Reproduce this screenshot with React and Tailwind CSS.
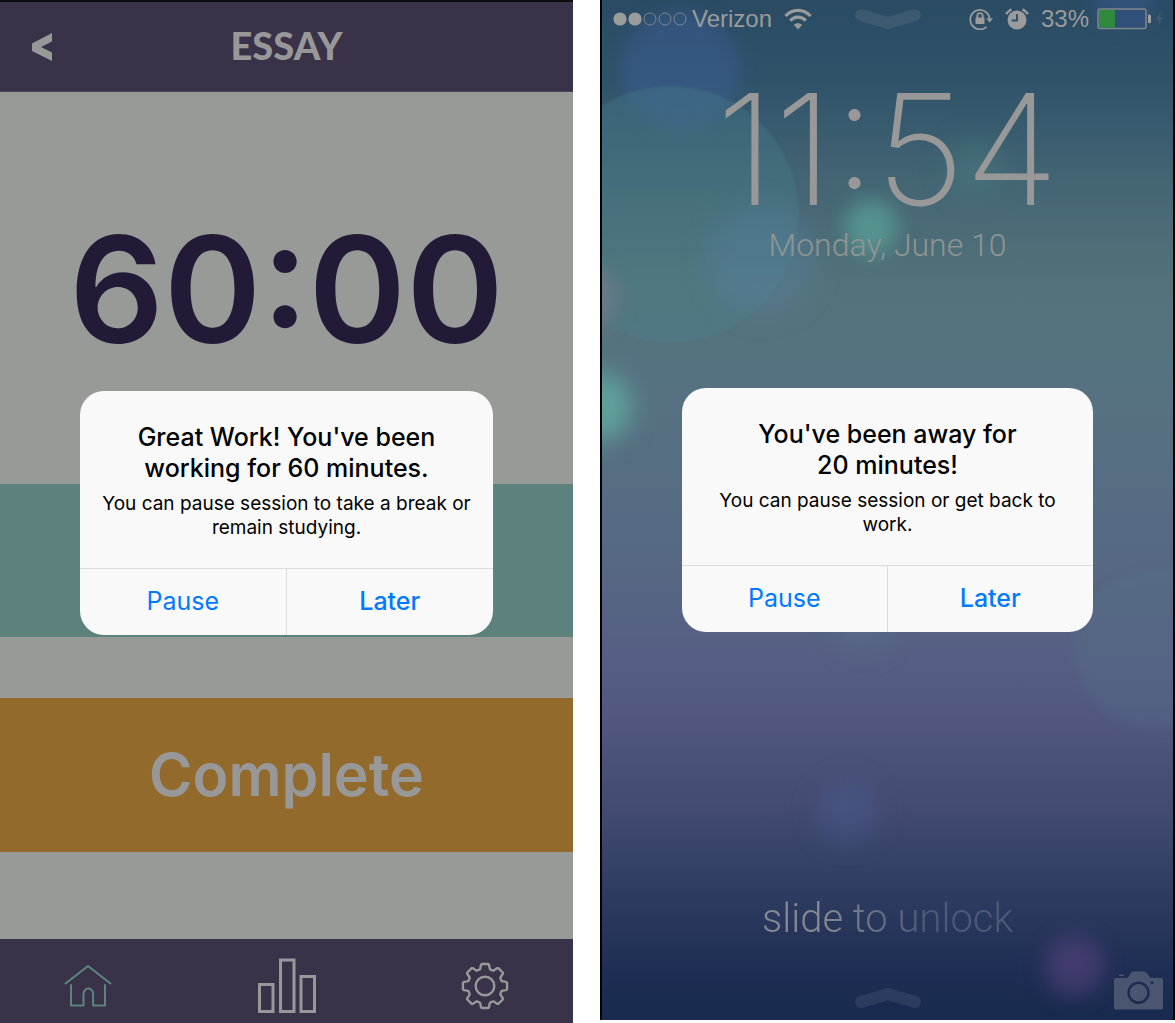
import React from "react";

const gearPath = (() => {
  const pts = [];
  const at = (r, deg) => {
    const a = (deg * Math.PI) / 180;
    pts.push(`${(24 + r * Math.sin(a)).toFixed(2)} ${(24 - r * Math.cos(a)).toFixed(2)}`);
  };
  for (let i = 0; i < 8; i++) {
    const c = i * 45;
    at(17.3, c - 17);
    at(18.4, c - 14.5);
    at(21.4, c - 11);
    at(22.3, c - 8.5);
    at(22.3, c + 8.5);
    at(21.4, c + 11);
    at(18.4, c + 14.5);
    at(17.3, c + 17);
  }
  return `M${pts.join("L")}Z`;
})();

function AlertDialog({ id, title, message }) {
  return (
    <div className="absolute inset-0 flex items-center px-20">
      <section
        role="alertdialog"
        aria-labelledby={`${id}-title`}
        aria-describedby={`${id}-message`}
        className="w-full overflow-hidden rounded-3xl bg-[#f9f9f9] text-center text-black"
      >
        <div className="px-3 pt-[31px] pb-7">
          <h2 id={`${id}-title`} className="text-[25px] leading-[31px] font-medium">
            {title[0]}
            <br />
            {title[1]}
          </h2>
          <p id={`${id}-message`} className="mt-2 text-[19px] leading-6">
            {message}
          </p>
        </div>
        <div className="grid h-[67px] grid-cols-2 divide-x divide-[#dcdcdd] border-t border-[#dcdcdd] text-[25px] text-[#007aff]">
          <button type="button">Pause</button>
          <button type="button" className="font-medium">Later</button>
        </div>
      </section>
    </div>
  );
}

function TimerPhone() {
  return (
    <main className="relative flex flex-col border-t-2 border-[#0d0c10] bg-[#989a98]">
      <header className="grid h-[90px] grid-cols-3 items-center border-b border-[#4b4558] bg-[#393249] px-8 text-[#989898]">
        <button type="button" aria-label="Back" className="justify-self-start">
          <svg width="20" height="28" viewBox="0 0 20 28" fill="currentColor">
            <path d="M20 0V8.500L9 14L20 19.500V28L0 18V10.500Z" />
          </svg>
        </button>
        <h1 className="pb-1 text-center font-[Lato] text-[38px] leading-10 font-black">ESSAY</h1>
      </header>
      <div className="flex flex-1 items-center justify-center pt-1 text-[148px] leading-none font-semibold text-[#221a37]">
        60:00
      </div>
      <div className="h-[153px] bg-[#5d817c]" />
      <button
        type="button"
        className="mt-[61px] h-[154px] bg-[#926b2c] text-[59px] font-semibold text-[#989898]"
      >
        Complete
      </button>
      <nav className="mt-[87px] flex h-[84px] items-center justify-between bg-[#393249] px-16 pt-2.5 text-[#989898]">
        <a href="#home" aria-label="Home" className="text-[#5d8580]">
          <svg width="48" height="44" viewBox="0 0 48 44" fill="none" stroke="currentColor" strokeWidth="2" strokeLinecap="round" strokeLinejoin="round">
            <path d="M1.500 19.500L24 2L46.500 19.500M7 21V41.500H19.500V30a4.800 5.500 0 0 1 9.600 0V41.500H41V21" />
          </svg>
        </a>
        <a href="#stats" aria-label="Statistics">
          <svg width="58" height="56" viewBox="0 0 58 56" fill="none" stroke="currentColor" strokeWidth="3">
            <path d="M1.500 26.500H15V53.500H1.500ZM22.500 2H36V53.500H22.500ZM43 18.500H56.500V53.500H43Z" />
          </svg>
        </a>
        <a href="#settings" aria-label="Settings">
          <svg width="48" height="48" viewBox="0 0 48 48" fill="none" stroke="currentColor" strokeWidth="2.400" strokeLinejoin="round">
            <path d={gearPath} />
            <circle cx="24" cy="24" r="9.300" />
          </svg>
        </a>
      </nav>
      <AlertDialog id="work" title={["Great Work! You've been", "working for 60 minutes."]} message="You can pause session to take a break or remain studying." />
    </main>
  );
}

function Grabber({ up }) {
  return (
    <svg width="68" height="24" viewBox="0 0 68 24" fill="none" stroke="#ffffff" strokeOpacity="0.08" strokeWidth="12" strokeLinecap="round" strokeLinejoin="round">
      <path d={up ? "M7 16L34 8L61 16" : "M7 8L34 16L61 8"} />
    </svg>
  );
}

function StatusBar() {
  return (
    <div className="grid h-[38px] grid-cols-[1fr_auto_1fr] items-center px-2.5 font-['Liberation_Sans'] text-2xl text-[#9b9b9b]">
      <div className="flex items-center">
        <svg width="78" height="16" viewBox="0 0 78 16" fill="none" stroke="currentColor">
          <circle cx="8" cy="8" r="6.600" fill="currentColor" stroke="none" />
          <circle cx="23" cy="8" r="6.600" fill="currentColor" stroke="none" />
          <circle cx="38" cy="8" r="6" strokeOpacity="0.700" />
          <circle cx="53" cy="8" r="6" strokeOpacity="0.700" />
          <circle cx="68" cy="8" r="6" strokeOpacity="0.700" />
        </svg>
        <span className="ml-0.5">Verizon</span>
        <svg className="ml-3" width="28" height="22" viewBox="0 0 28 22" fill="none" stroke="currentColor" strokeWidth="3.200">
          <path d="M1.500 8C8.500 0.500 19.500 0.500 26.500 8M6.200 12.600C10.600 8 17.400 8 21.800 12.600" />
          <path d="M14 21.500L9.800 16.800C12 14.700 16 14.700 18.200 16.800Z" fill="currentColor" stroke="none" />
        </svg>
      </div>
      <Grabber />
      <div className="flex items-center justify-end">
        <svg width="24" height="22" viewBox="0 0 24 22" fill="none" stroke="currentColor" strokeWidth="1.800">
          <path d="M17.500 18.800A9.700 9.700 0 1 1 20.600 10.500" />
          <path d="M17.300 10.200H24L20.600 14.500Z" fill="currentColor" stroke="none" />
          <rect x="6.500" y="9.500" width="9" height="6.500" rx="0.600" fill="currentColor" stroke="none" />
          <path d="M8.300 10V7.800a2.700 2.700 0 0 1 5.400 0V10" />
        </svg>
        <svg className="ml-3" width="24" height="22" viewBox="0 0 24 22">
          <circle cx="12" cy="12" r="9.500" fill="currentColor" />
          <path d="M1 6A16 16 0 0 1 6.500 1.300M23 6A16 16 0 0 0 17.500 1.300" fill="none" stroke="currentColor" strokeWidth="2.500" />
          <path d="M12 6V12.500H6.800" fill="none" stroke="#2e5068" strokeWidth="2" />
        </svg>
        <span className="ml-3">33%</span>
        <svg className="ml-2" width="66" height="22" viewBox="0 0 66 22">
          <rect x="1" y="1" width="48" height="19.500" rx="2" fill="#30507a" stroke="#7f868d" strokeWidth="1.500" />
          <rect x="2" y="2" width="16" height="17.500" fill="#2f8a3e" />
          <path d="M51 6.500h1.500q1.500 0 1.500 1.500v5.500q0 1.500-1.500 1.500H51Z" fill="#a0a0a0" />
          <path d="M64 3L58.500 12H62L61 18L66 9H63Z" fill="#3d5b70" />
        </svg>
      </div>
    </div>
  );
}

function Wallpaper() {
  return (
    <div aria-hidden="true" className="absolute inset-0 overflow-hidden bg-[linear-gradient(to_bottom,#2a4b63_0%,#30536a_8%,#446574_18%,#53737a_28%,#567282_38%,#566a83_53%,#565f83_64%,#525880_70%,#434b70_79%,#303d62_87%,#1f2e54_95%,#182a4e_100%)]">
      <div className="absolute top-2.5 left-[18px] size-[120px] rounded-full bg-[#4060a0]/40 blur-[8px]" />
      <div className="absolute top-[86px] -left-[60px] size-[257px] rounded-full bg-[#4a8590]/30 blur-[1px]" />
      <div className="absolute top-[205px] left-[105px] size-[110px] rounded-full bg-[#5b80a8]/30 blur-md" />
      <div className="absolute top-[200px] left-[242px] size-[54px] rounded-full bg-[#5fb5a4]/55 blur-[10px]" />
      <div className="absolute top-[140px] left-[345px] size-[56px] rounded-full bg-[#4f9088]/30 blur-[14px]" />
      <div className="absolute top-[265px] -left-[50px] size-[65px] rounded-full bg-[#8a7c90]/50 blur-[10px]" />
      <div className="absolute top-[372px] -left-[40px] size-[70px] rounded-full bg-[#62b5a5]/70 blur-[12px]" />
      <div className="absolute top-[570px] left-[472px] size-40 rounded-full bg-[#567c8a]/20 blur-[5px]" />
      <div className="absolute top-[595px] left-[230px] size-[60px] rounded-full bg-[#5a7a94]/25 blur-[12px]" />
      <div className="absolute top-[780px] left-[213px] size-16 rounded-full bg-[#4c5fa0]/35 blur-[12px]" />
      <div className="absolute top-[936px] left-[442px] size-[60px] rounded-full bg-[#62488a]/50 blur-[10px]" />
      <div className="absolute -top-10 left-[490px] size-16 rounded-full bg-[#4060a0]/40 blur-[10px]" />
    </div>
  );
}

function LockPhone() {
  return (
    <main className="relative mb-[3px] flex border-r-2 border-l-2 border-black">
      <Wallpaper />
      <div className="relative flex flex-1 flex-col text-center">
        <StatusBar />
        <time className="mt-[51px] text-[154px] leading-[120px] font-extralight text-[#989898]">11:54</time>
        <p className="mt-4 font-[Roboto] text-[32px] leading-10 font-light text-[#8f9594]">Monday, June 10</p>
        <p className="mt-auto font-[Roboto] text-[40px] leading-[48px] font-light">
          <span className="bg-linear-to-r from-[#858992] from-25% to-[#4d5977] to-65% bg-clip-text text-transparent">slide to unlock</span>
        </p>
        <div className="mt-7 grid grid-cols-[1fr_auto_1fr] items-end px-2.5 pb-2.5">
          <span />
          <Grabber up />
          <button type="button" aria-label="Camera" className="justify-self-end">
            <svg width="49" height="39" viewBox="0 0 49 39">
              <path fill="#4a5570" fillRule="evenodd" d="M2 7H13.500L17 1.800Q18 .5 19.500 .5H30Q31.500 .5 32.500 1.800L36.500 7H47Q49 7 49 9V36.500Q49 38.500 47 38.500H2Q0 38.500 0 36.500V9Q0 7 2 7ZM24.500 10.500A11.200 11.200 0 1 0 24.510 10.500ZM38 10.200A1.600 1.600 0 1 0 38.010 10.200ZM24.500 13A8.700 8.700 0 1 1 24.490 13Z" />
              <rect x="5" y="3.500" width="5" height="1.500" fill="#4a5570" />
            </svg>
          </button>
        </div>
      </div>
      <AlertDialog id="away" title={["You've been away for", "20 minutes!"]} message="You can pause session or get back to work." />
    </main>
  );
}

export default function App() {
  return (
    <div className="grid min-h-screen grid-cols-[573fr_575fr] gap-x-[27px] bg-white font-[Inter,sans-serif]">
      <TimerPhone />
      <LockPhone />
    </div>
  );
}
